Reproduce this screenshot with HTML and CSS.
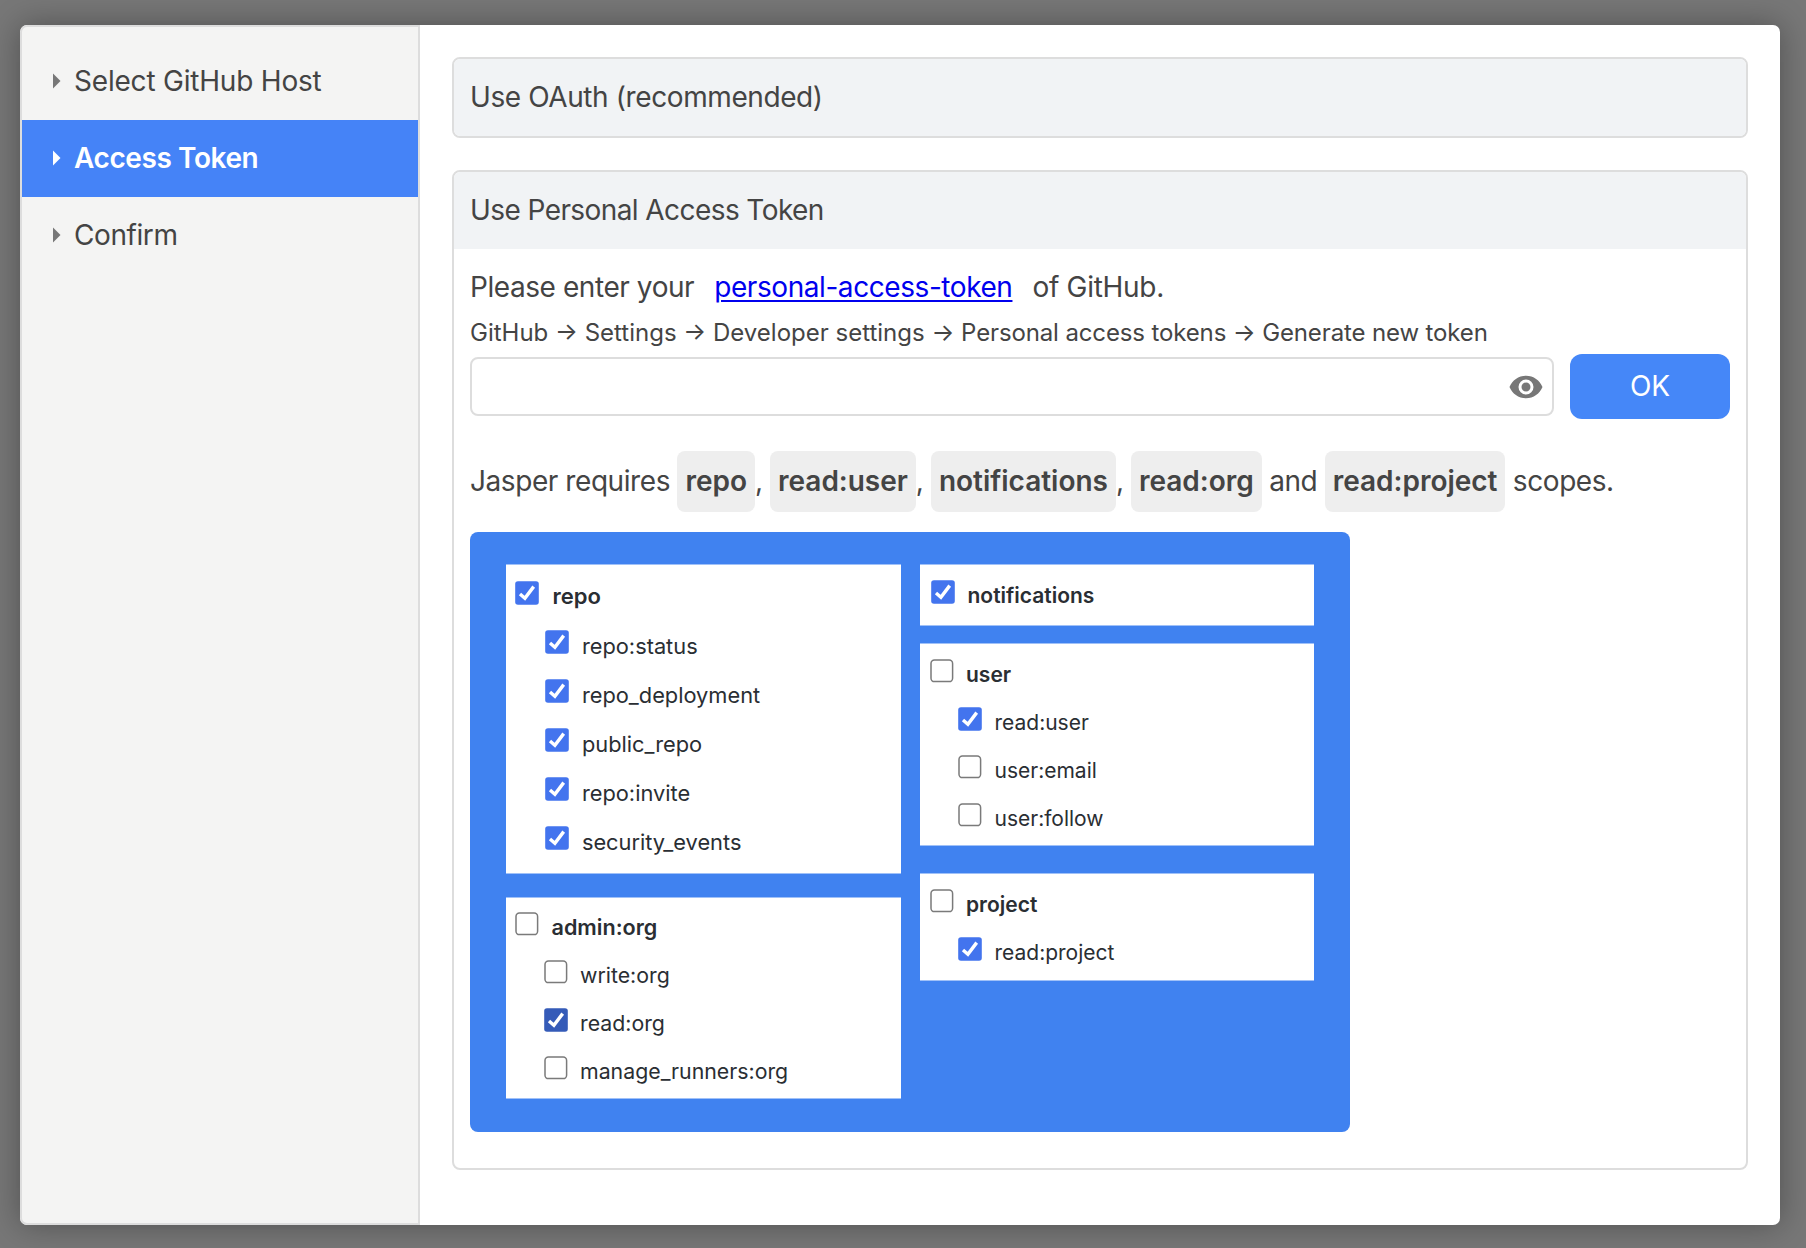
FILE: index.html
```html
<!DOCTYPE html>
<html lang="en">
<head>
<meta charset="utf-8">
<title>Jasper setup</title>
<link rel="stylesheet" href="styles.css">
</head>
<body>
<svg class="sprite" aria-hidden="true">
  <symbol id="arrow" viewBox="0 0 8 16"><path d="M0 0.5 7.5 8 0 15.5z"/></symbol>
  <symbol id="on" viewBox="0 0 24 24"><rect x=".2" y=".2" width="23.6" height="23.6" rx="2.8"/><path class="tick" d="M5 13 9.900 17.200 18.700 5.600"/></symbol>
  <symbol id="off" viewBox="0 0 24 24"><rect class="box" x="1" y="1" width="21.6" height="21.6" rx="3.4"/></symbol>
</svg>
<div class="dialog">
  <nav class="side">
    <a class="step host"><svg><use href="#arrow"/></svg><span>Select GitHub Host</span></a>
    <a class="step active"><svg><use href="#arrow"/></svg><span>Access Token</span></a>
    <a class="step"><svg><use href="#arrow"/></svg><span>Confirm</span></a>
  </nav>
  <main class="content">
    <section class="panel oauth"><h2>Use OAuth (recommended)</h2></section>
    <section class="panel">
      <h2>Use Personal Access Token</h2>
      <div class="body">
        <p class="lead"><span>Please enter your</span><a class="link" href="#">personal-access-token</a><span class="tail">of GitHub.</span></p>
        <p class="path">GitHub → Settings → Developer settings → <span>Personal access tokens → Generate new token</span></p>
        <div class="entry">
          <div class="field"><svg viewBox="0 0 24 24"><path d="M12 9a3 3 0 0 0-3 3 3 3 0 0 0 3 3 3 3 0 0 0 3-3 3 3 0 0 0-3-3m0 8a5 5 0 0 1-5-5 5 5 0 0 1 5-5 5 5 0 0 1 5 5 5 5 0 0 1-5 5m0-12.5C7 4.500 2.730 7.610 1 12c1.730 4.390 6 7.500 11 7.500s9.270-3.110 11-7.500c-1.730-4.390-6-7.500-11-7.500z"/></svg></div>
          <button class="ok">OK</button>
        </div>
        <p class="scopes">Jasper requires <code>repo</code>, <code>read:user</code>, <code>notifications</code>, <code>read:org</code> and <code>read:project</code> scopes.</p>
        <div class="board">
          <div class="col">
            <ul class="card repo">
              <li><svg><use href="#on"/></svg><b>repo</b></li>
              <li><svg><use href="#on"/></svg><span>repo:status</span></li>
              <li><svg><use href="#on"/></svg><span>repo_deployment</span></li>
              <li><svg><use href="#on"/></svg><span>public_repo</span></li>
              <li><svg><use href="#on"/></svg><span>repo:invite</span></li>
              <li><svg><use href="#on"/></svg><span>security_events</span></li>
            </ul>
            <ul class="card org">
              <li><svg><use href="#off"/></svg><b>admin:org</b></li>
              <li><svg><use href="#off"/></svg><span>write:org</span></li>
              <li><svg class="dark"><use href="#on"/></svg><span>read:org</span></li>
              <li><svg><use href="#off"/></svg><span>manage_runners:org</span></li>
            </ul>
          </div>
          <div class="col">
            <ul class="card notif">
              <li><svg><use href="#on"/></svg><b>notifications</b></li>
            </ul>
            <ul class="card user">
              <li><svg><use href="#off"/></svg><b>user</b></li>
              <li><svg><use href="#on"/></svg><span>read:user</span></li>
              <li><svg><use href="#off"/></svg><span>user:email</span></li>
              <li><svg><use href="#off"/></svg><span>user:follow</span></li>
            </ul>
            <ul class="card project">
              <li><svg><use href="#off"/></svg><b>project</b></li>
              <li><svg><use href="#on"/></svg><span>read:project</span></li>
            </ul>
          </div>
        </div>
      </div>
    </section>
  </main>
</div>
</body>
</html>
```
FILE: styles.css
```css
* { box-sizing: border-box; }
body {
  margin: 0;
  height: 1248px;
  padding: 25px 26px 23px 20px;
  background: #777;
  color: #444;
  font: 28px/1 Inter, "Liberation Sans", sans-serif;
  overflow: hidden;
}
p, h2, ul { margin: 0; padding: 0; }
.sprite { position: absolute; width: 0; height: 0; }
.dialog {
  display: flex;
  height: 1200px;
  border-radius: 7px;
  background: #fff;
  box-shadow: 0 0 32px rgba(0, 0, 0, .33);
  overflow: hidden;
}
.side {
  width: 400px;
  padding-top: 16px;
  border: 2px solid #ddd;
  border-radius: 7px 0 0 7px;
  background: #f4f4f3;
}
.step {
  display: flex;
  align-items: center;
  height: 77px;
  padding: 0 0 1px 31px;
  letter-spacing: -.42px;
}
.step.host { letter-spacing: -.2px; }
.step svg { width: 8px; height: 16px; margin: 0 13px 1px 0; fill: #777; }
.step.active { background: #4583f7; color: #fff; font-weight: 600; }
.step.active svg { fill: #fff; }
.content {
  flex: 1;
  display: flex;
  flex-direction: column;
  gap: 32px;
  padding: 32px;
}
.panel { border: 2px solid #ddd; border-radius: 8px; overflow: hidden; }
.panel h2 {
  height: 77px;
  padding-left: 16px;
  background: #f1f3f5;
  font-size: 28px;
  font-weight: 400;
  line-height: 76px;
  letter-spacing: -.58px;
}
.panel.oauth h2 { letter-spacing: -.4px; }
.body { height: 919px; padding: 16px; }
.lead { display: flex; gap: 20px; height: 45px; line-height: 44px; letter-spacing: -.43px; }
.lead .tail { letter-spacing: -.3px; }
.link { color: #00e; text-decoration: underline; text-decoration-thickness: 2px; text-underline-offset: 3px; }
.path { height: 44px; font-size: 24px; line-height: 46px; white-space: nowrap; }
.path span { letter-spacing: -.13px; }
.entry { display: flex; align-items: center; gap: 16px; height: 65px; }
.field {
  flex: 1;
  display: flex;
  align-items: center;
  justify-content: flex-end;
  height: 59px;
  padding-right: 8px;
  border: 2px solid #ddd;
  border-radius: 8px;
}
.field svg { width: 36px; height: 36px; fill: #777; }
.ok {
  width: 160px;
  height: 65px;
  padding: 0 0 1px;
  border: 0;
  border-radius: 12px;
  background: #4587f8;
  color: #fff;
  font: inherit;
}
.scopes { margin-top: 32px; height: 81px; line-height: 61px; white-space: nowrap; letter-spacing: -.43px; }
.scopes code {
  display: inline-block;
  padding: 0 8px;
  border-radius: 8px;
  background: #eee;
  font-family: inherit;
  font-weight: 600;
  letter-spacing: -.02px;
}
.board {
  display: flex;
  gap: 19px;
  width: 880px;
  height: 600px;
  padding: 33px 36px;
  border-radius: 8px;
  background: #4082f0;
}
.col { width: 395px; }
.card {
  --pitch: 48px;
  --indent: 28.5px;
  list-style: none;
  background: #fff;
  box-shadow: 0 1px rgba(255, 255, 255, .5), 0 -1px rgba(255, 255, 255, .5);
  color: #2a2e33;
  font-size: 21px;
  line-height: 24px;
}
.card li { display: flex; height: var(--pitch); padding-left: var(--indent); }
.card li:first-child { padding-left: 0; }
.card svg { width: 24px; height: 24px; margin-right: 12.5px; fill: #4374ee; }
.card svg.dark { fill: #355bb8; }
.card span, .card b { margin-top: 3.5px; font-weight: 400; white-space: nowrap; }
.card b { font-weight: 600; }
.repo { --pitch: 49.1px; --indent: 29.3px; height: 308px; padding: 16px 9.300px; font-size: 21.800px; }
.repo svg { margin-right: 13.300px; }
.card.repo span { margin-top: 4px; }
.card.repo b { margin-top: 3px; font-size: 22px; }
.org { height: 200px; margin-top: 25px; padding: 14px 9px; font-size: 21.300px; }
.card.org span, .card.org b { margin-top: 3px; }
.org b { font-size: 21.600px; }
.notif { height: 60px; padding: 15px 11.500px; }
.user { height: 201px; margin-top: 19px; padding: 15px 10px; }
.card.user span, .card.user b { margin-top: 4px; }
.project { height: 106px; margin-top: 29px; padding: 15px 10px; }
.tick { fill: none; stroke: #fff; stroke-width: 3.4; }
.box { fill: #fff; stroke: #7a7a7a; stroke-width: 1.5; }
```
